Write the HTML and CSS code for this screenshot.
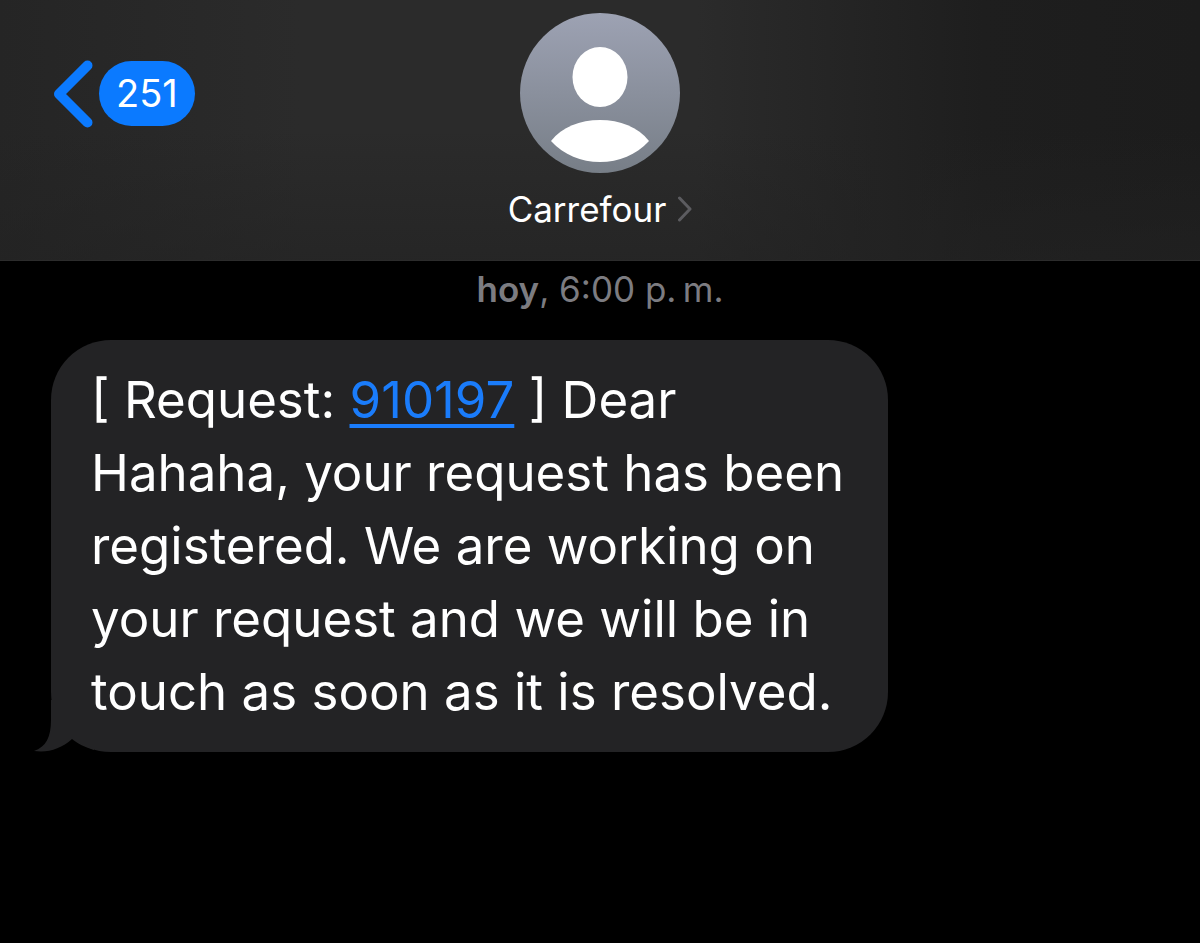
FILE: index.html
```html
<!DOCTYPE html>
<html lang="en">

<head>
    <meta charset="UTF-8">
    <meta name="viewport" content="width=device-width, initial-scale=1.0">
    <title>Carrefour</title>
    <link rel="stylesheet" href="styles.css">
</head>

<body>
    <header class="header">
        <button class="back" type="button" aria-label="Back, 251 unread">
            <svg class="back-arrow" viewBox="0 0 40 68" aria-hidden="true">
                <path d="M34.500 5.500 L6 34 L34.500 62.500" />
            </svg>
            <span class="badge">251</span>
        </button>

        <button class="contact" type="button">
            <svg class="avatar" viewBox="0 0 160 160" aria-hidden="true">
                <defs>
                    <linearGradient id="avatarFill" x1="0" y1="0" x2="0" y2="1">
                        <stop offset="0" stop-color="#9da2b3" />
                        <stop offset="1" stop-color="#777e87" />
                    </linearGradient>
                </defs>
                <circle cx="80" cy="80" r="80" fill="url(#avatarFill)" />
                <ellipse cx="80" cy="64" rx="27.500" ry="30" fill="#fff" />
                <path d="M31 128 C42 114 60 107 80 107 C100 107 118 114 129 128 C116 142 99 149 80 149 C61 149 44 142 31 128 Z" fill="#fff" />
            </svg>
            <span class="name">Carrefour
                <svg class="name-arrow" viewBox="0 0 14 26" aria-hidden="true">
                    <path d="M1.500 2 L12 13 L1.500 24" />
                </svg>
            </span>
        </button>
    </header>

    <main class="chat">
        <p class="time"><b>hoy</b>, 6:00 p.&#8239;m.</p>
        <div class="bubble">
            <p class="message">[ Request: <a href="#">910197</a> ] Dear Hahaha, your request has been registered. We are working on your request and we will be in touch as soon as it is resolved.</p>
            <svg class="tail" viewBox="0 0 60 52" aria-hidden="true">
                <path d="M17 0 V20 C17 37 12 47 0 51 C14 53 27 49 38 39 C43 43 50 47 60 50 V0 Z" />
            </svg>
        </div>
    </main>
</body>

</html>
```

FILE: styles.css
```css
* {
    box-sizing: border-box;
}

body {
    margin: 0;
    min-height: 100vh;
    background: #000;
    color: #fff;
    font-family: Inter, "Liberation Sans", sans-serif;
}

button {
    padding: 0;
    border: 0;
    background: none;
    color: inherit;
    font-family: inherit;
    cursor: pointer;
}

p {
    margin: 0;
}

.header {
    display: grid;
    grid-template-columns: 1fr auto 1fr;
    align-items: start;
    padding: 13px 53px 29px;
    border-bottom: 1px solid #2c2c2c;
    background: linear-gradient(to bottom, rgba(32, 32, 32, 0) 50%, rgba(34, 34, 34, 0.6)),
        linear-gradient(to right, #252525, #2b2b2b 25%, #2b2b2b 58%, #1e1e1e 82%, #1c1c1c);
}

.back {
    display: flex;
    align-items: center;
    justify-self: start;
    gap: 6px;
    height: 161px;
}

.back-arrow {
    width: 40px;
    height: 68px;
    fill: none;
    stroke: #0b7aff;
    stroke-width: 10;
    stroke-linecap: round;
    stroke-linejoin: round;
}

.badge {
    padding: 0 17px;
    border-radius: 33px;
    background: #0b7aff;
    font-size: 38px;
    line-height: 65px;
}

.contact {
    display: flex;
    flex-direction: column;
    align-items: center;
    gap: 14px;
}

.avatar {
    width: 160px;
    height: 160px;
}

.name {
    display: flex;
    align-items: center;
    gap: 12px;
    font-size: 35px;
    line-height: 44px;
}

.name-arrow {
    width: 14px;
    height: 26px;
    fill: none;
    stroke: #5c5c60;
    stroke-width: 3;
    stroke-linecap: round;
    stroke-linejoin: round;
}

.chat {
    padding: 6px 51px 40px;
}

.time {
    margin-bottom: 29px;
    color: #7c7c81;
    font-size: 35px;
    line-height: 44px;
    text-align: center;
}

.time b {
    font-weight: 600;
}

.bubble {
    position: relative;
    width: fit-content;
    max-width: 837px;
    padding: 23px 40px 24px;
    border-radius: 60px;
    background: #232325;
}

.message {
    font-size: 51px;
    line-height: 73px;
}

.message a {
    color: #1a7cfb;
    text-decoration-thickness: 4px;
    text-underline-offset: 6px;
    text-decoration-skip-ink: none;
}

/* tail hangs off the bottom left corner */
.tail {
    position: absolute;
    bottom: 0;
    left: -17px;
    width: 60px;
    height: 52px;
    fill: #232325;
}
```
